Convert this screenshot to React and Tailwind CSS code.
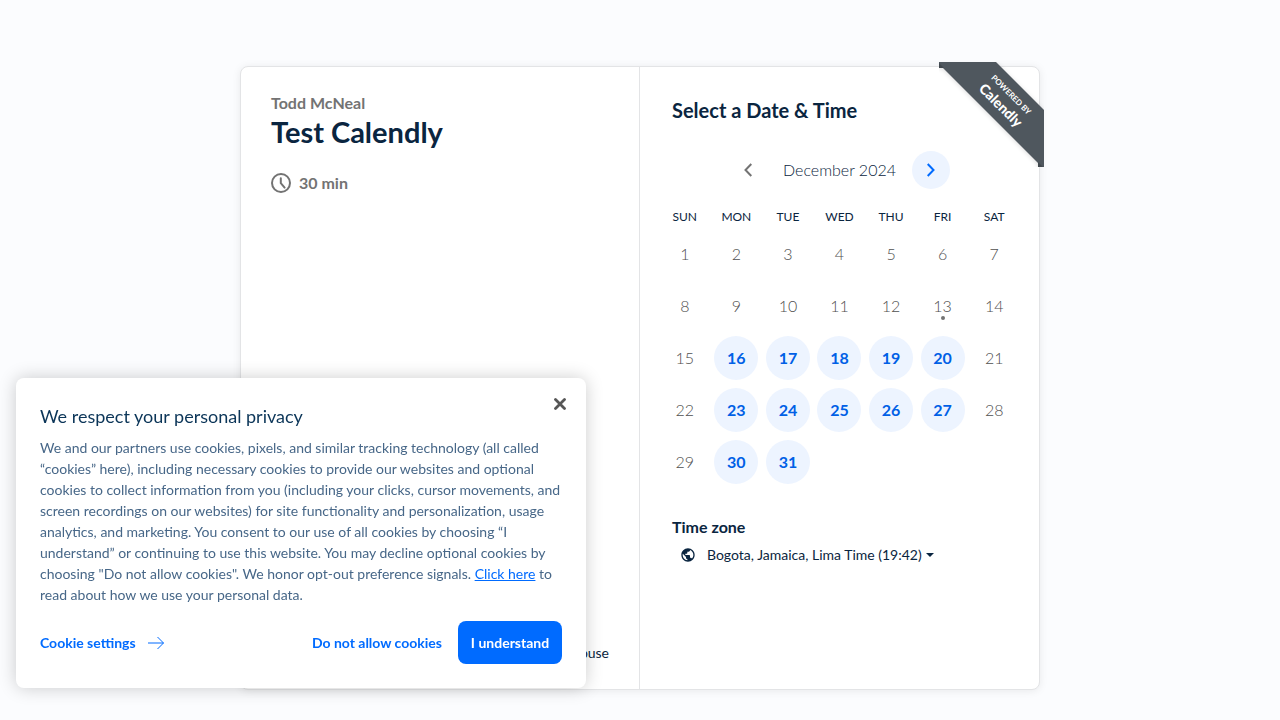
import { MdPublic } from 'react-icons/md';

const DAY_NAMES = ['SUN', 'MON', 'TUE', 'WED', 'THU', 'FRI', 'SAT'];
const WEEKS = [
  [1, 2, 3, 4, 5, 6, 7],
  [8, 9, 10, 11, 12, 13, 14],
  [15, 16, 17, 18, 19, 20, 21],
  [22, 23, 24, 25, 26, 27, 28],
  [29, 30, 31, null, null, null, null],
];
const AVAILABLE = new Set([16, 17, 18, 19, 20, 23, 24, 25, 26, 27, 30, 31]);
const TODAY = 13;

function ClockIcon() {
  return (
    <svg width="20" height="20" viewBox="0 0 20 20" fill="none" stroke="currentColor" strokeWidth="2" aria-hidden="true">
      <circle cx="10" cy="10" r="9" />
      <path d="M9.8 5.3V10.2L13.6 14.6" strokeLinecap="round" strokeLinejoin="round" />
    </svg>
  );
}

function Chevron({ left }) {
  return (
    <svg width="8" height="14" viewBox="0 0 8 14" fill="none" stroke="currentColor" strokeWidth="2" aria-hidden="true">
      <path d={left ? 'M7.3 1L1.5 7L7.3 13' : 'M0.7 1L6.5 7L0.7 13'} />
    </svg>
  );
}

function Ribbon() {
  return (
    <a
      href="#calendly"
      className="absolute -top-[5px] -right-[5px] block size-[105px] overflow-hidden text-white"
    >
      <svg className="block size-full drop-shadow-sm" viewBox="0 0 105 105" aria-hidden="true">
        <path d="M0 0H57L105 48V105H99V101L4 6H0z" fill="#4f575e" />
        <path d="M0 1L5 6H0zM99 100L104 105H99z" fill="#41484e" />
      </svg>
      <span className="absolute top-6 left-5 flex w-[92px] rotate-45 flex-col items-center font-bold">
        <span className="text-[8px] leading-[12px]">POWERED BY</span>
        <span className="text-[14px] leading-[18px] font-black">Calendly</span>
      </span>
    </a>
  );
}

function Day({ day }) {
  if (!day) return null;
  const open = AVAILABLE.has(day);
  return (
    <button
      type="button"
      disabled={!open}
      className={
        open
          ? 'relative mx-auto block size-11 rounded-full bg-[#edf4ff] text-base font-bold text-[#0060e6]'
          : 'relative mx-auto block size-11 rounded-full text-base font-light text-[#505050]'
      }
    >
      {day}
      {day === TODAY && (
        <span className="absolute bottom-2 left-1/2 size-1 -translate-x-1/2 rounded-full bg-[#737373]" />
      )}
    </button>
  );
}

function Calendar() {
  return (
    <section className="w-1/2 px-[19px] pt-[31px] pb-8">
      <h2 className="px-[13px] text-[20px] leading-6 font-bold">Select a Date &amp; Time</h2>
      <div className="mt-[29px] flex items-center justify-center">
        <button type="button" aria-label="Previous month" className="flex size-[38px] items-center justify-center rounded-full text-[#737373]">
          <Chevron left />
        </button>
        <span className="w-[145px] text-center text-base font-light">December 2024</span>
        <button type="button" aria-label="Next month" className="flex size-[38px] items-center justify-center rounded-full bg-[#edf4ff] text-[#006bff]">
          <Chevron />
        </button>
      </div>
      <table className="mt-[17px] w-full table-fixed border-collapse">
        <thead>
          <tr className="h-[22px]">
            {DAY_NAMES.map((name) => (
              <th key={name} scope="col" className="p-0 text-[12px] leading-4 font-normal">{name}</th>
            ))}
          </tr>
        </thead>
        <tbody>
          {WEEKS.map((week) => (
            <tr key={week[0]} className="h-[52px]">
              {week.map((day, i) => (
                <td key={i} className="p-0"><Day day={day} /></td>
              ))}
            </tr>
          ))}
        </tbody>
      </table>
      <div className="mt-7 px-[13px]">
        <h3 className="text-base leading-[22px] font-bold">Time zone</h3>
        <button type="button" className="mt-[7px] flex items-center pl-2 text-sm leading-5">
          <MdPublic className="mr-[11px] size-4" />
          Bogota, Jamaica, Lima Time (19:42)
          <svg className="ml-1" width="8" height="4" viewBox="0 0 8 4" aria-hidden="true">
            <path d="M0 0H8L4 4z" fill="currentColor" />
          </svg>
        </button>
      </div>
    </section>
  );
}

function CookieBanner() {
  return (
    <div
      role="dialog"
      aria-labelledby="cookie-title"
      className="fixed bottom-8 left-4 w-[570px] max-w-full rounded-lg bg-white px-6 pt-[26px] pb-6 shadow-[0_0_18px_rgba(0,0,0,0.2)]"
    >
      <button type="button" aria-label="Close" className="absolute top-5 right-5 text-[#565656]">
        <svg width="12" height="12" viewBox="0 0 12 12" fill="none" stroke="currentColor" strokeWidth="2.8" strokeLinecap="round" aria-hidden="true">
          <path d="M1.5 1.5L10.5 10.5M10.5 1.5L1.5 10.5" />
        </svg>
      </button>
      <h2 id="cookie-title" className="text-[18px] leading-6 text-[#0b3558]">We respect your personal privacy</h2>
      <p className="mt-[9px] text-[14px] leading-[21px] text-[#476788]">
        We and our partners use cookies, pixels, and similar tracking technology (all called “cookies” here), including
        necessary cookies to provide our websites and optional cookies to collect information from you (including your
        clicks, cursor movements, and screen recordings on our websites) for site functionality and personalization,
        usage analytics, and marketing. You consent to our use of all cookies by choosing “I understand” or continuing
        to use this website. You may decline optional cookies by choosing "Do not allow cookies". We honor opt-out
        preference signals. <a href="#privacy" className="text-[#006bff] underline">Click here</a> to read about how we
        use your personal data.
      </p>
      <div className="mt-4 flex items-center text-[14px] font-bold text-[#006bff]">
        <button type="button" className="flex items-center gap-3">
          Cookie settings
          <svg width="16" height="14" viewBox="0 0 16 14" fill="none" stroke="currentColor" aria-hidden="true">
            <path d="M0 7H15.5M9.5 1L15.5 7L9.5 13" />
          </svg>
        </button>
        <button type="button" className="ml-auto">Do not allow cookies</button>
        <button type="button" className="ml-4 h-[43px] w-[104px] rounded-lg bg-[#006bff] text-white">I understand</button>
      </div>
    </div>
  );
}

export default function App() {
  return (
    <div className="min-h-screen bg-[#fbfcfe] pt-[66px] font-['Lato','Liberation_Sans',sans-serif] text-[#0a2540]">
      <main className="relative mx-auto flex min-h-[624px] w-full max-w-[800px] rounded-lg border border-[#e3e4e6] bg-white shadow-[0_1px_8px_rgba(0,0,0,0.08)]">
        <section className="flex w-1/2 flex-col border-r border-[#e3e4e6] px-[30px] pt-[25px] pb-[26px]">
          <p className="text-base leading-[22px] font-bold text-[#737373]">Todd McNeal</p>
          <h1 className="text-[29px] leading-9 font-bold">Test Calendly</h1>
          <div className="mt-[21px] flex items-center gap-2 text-base leading-6 font-bold text-[#737373]">
            <ClockIcon />
            30 min
          </div>
          <a href="#report" className="mt-auto self-end text-[14px] leading-5">Report abuse</a>
        </section>
        <Calendar />
        <Ribbon />
      </main>
      <CookieBanner />
    </div>
  );
}
